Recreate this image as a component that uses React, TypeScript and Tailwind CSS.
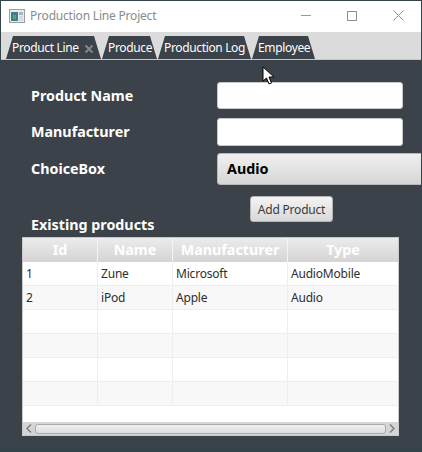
const font = { fontFamily: '"Noto Sans", "Open Sans", sans-serif' };

function Tab({ w, label, close, ml }: { w: string; label: string; close?: boolean; ml: string }) {
  return (
    <div className={`${w} ${ml} h-[23px] shrink-0 bg-[#3c4249] flex items-center whitespace-nowrap text-white text-[12px] tracking-[-0.35px] pt-[1px] [clip-path:polygon(7px_0,calc(100%-7px)_0,100%_100%,0_100%)] pl-[6px]`}>
      <span>{label}</span>
      {close && (
        <svg width="10" height="10" viewBox="0 0 10 10" className="ml-[5px] mt-[1px]">
          <path d="M1.5 1.5 L8.5 8.5 M8.5 1.5 L1.5 8.5" stroke="#83878c" strokeWidth="2" />
        </svg>
      )}
    </div>
  );
}

const Row = ({ cells, odd }: { cells: string[]; odd: boolean }) => (
  <div className={`grid grid-cols-[75px_75px_115px_110px] h-6 border-b border-[#eeeeee] ${odd ? 'bg-[#f8f8f8]' : 'bg-white'}`}>
    {cells.map((c, i) => (
      <div key={i} className="border-r border-[#eeeeee] last:border-r-0 pl-[3px] text-[12px] tracking-[-0.2px] leading-[23px] text-[#2e2e2e]">{c}</div>
    ))}
  </div>
);

const rows = [
  ['1', 'Zune', 'Microsoft', 'AudioMobile'],
  ['2', 'iPod', 'Apple', 'Audio'],
  ['', '', '', ''],
  ['', '', '', ''],
  ['', '', '', ''],
  ['', '', '', ''],
];

export default function App() {
  return (
    <div style={font} className="relative w-[422px] h-[452px] overflow-hidden bg-[#34444a] pt-px pl-px pr-px">
      <div className="h-[31px] bg-white flex items-center relative pb-[2px]">
        <svg width="16" height="14" viewBox="0 0 16 14" className="ml-[8px]">
          <rect x="0.5" y="0.5" width="15" height="13" fill="#e8ecee" stroke="#9a9fa3" />
          <rect x="2" y="3" width="7" height="9" fill="#3f7d8c" />
          <rect x="4" y="6" width="3" height="4" fill="#5aa36f" />
          <rect x="10" y="3" width="4" height="3" fill="#aab4bc" />
          <rect x="10" y="7" width="4" height="5" fill="#d3d9dd" />
        </svg>
        <span className="ml-[5px] text-[12px] tracking-[-0.2px] text-[#8b8b8b]">Production Line Project</span>
        <div className="ml-auto flex items-center">
          <div className="w-[46px] flex justify-center">
            <div className="w-[10px] h-px bg-[#9a9a9a]" />
          </div>
          <div className="w-[46px] flex justify-center">
            <div className="w-[10px] h-[10px] border border-[#8f8f8f]" />
          </div>
          <div className="w-[46px] flex justify-center">
            <svg width="11" height="11" viewBox="0 0 11 11">
              <path d="M0.5 0.5 L10.5 10.5 M10.5 0.5 L0.5 10.5" stroke="#909090" strokeWidth="1" />
            </svg>
          </div>
        </div>
      </div>

      <div className="h-[28px] bg-[#dbdbdb] flex items-end border-b border-[#c4c6c8] pl-[5px]">
        <Tab w="w-[95px]" ml="ml-0" label="Product Line" close />
        <Tab w="w-[55px]" ml="ml-px" label="Produce" />
        <Tab w="w-[93px]" ml="ml-px" label="Production Log" />
        <Tab w="w-[63px]" ml="ml-px" label="Employee" />
      </div>

      <div className="h-[386px] bg-[#3c4249] relative overflow-hidden pt-[22px] pl-[30px]">
        <div className="grid grid-cols-[186px_220px] w-[420px] font-bold text-white text-[14.3px]">
          <div className="h-[27px] flex items-center">Product Name</div>
          <input className="h-[27px] w-[186px] bg-white rounded-[3px] border border-[#c6c8ca]" readOnly />
          <div className="h-[28px] mt-[9px] flex items-center">Manufacturer</div>
          <input className="h-[28px] mt-[9px] w-[186px] bg-white rounded-[3px] border border-[#c6c8ca]" readOnly />
          <div className="h-[32px] mt-[7px] flex items-center">ChoiceBox</div>
          <div className="h-[32px] mt-[7px] w-[220px] rounded-[3px] border border-[#b8b8b8] bg-gradient-to-b from-[#f0f0f0] to-[#d6d6d6] text-black pl-[9px] flex items-center">Audio</div>
        </div>
        <div className="flex items-end h-[52px]">
          <div className="font-bold text-white text-[14.3px] leading-[20px] mb-[2px] w-[219px]">Existing products</div>
          <button className="h-[26px] w-[83px] mb-[15px] pt-[1px] rounded-[3px] border border-[#b4b4b4] bg-gradient-to-b from-[#f4f4f4] to-[#d8d8d8] text-[12px] tracking-[-0.2px] text-[#3a3a3a]">Add Product</button>
        </div>
        <div className="-ml-[9px] w-[377px] h-[199px] bg-white border border-[#c9c9c9] flex flex-col">
          <div className="grid grid-cols-[75px_75px_115px_110px] h-[24px] shrink-0 bg-gradient-to-b from-[#ececec] to-[#d4d4d4] text-white font-bold text-[14.3px] text-center">
            <div className="border-r border-[#f4f4f4] leading-[24px]">Id</div>
            <div className="border-r border-[#f4f4f4] leading-[24px]">Name</div>
            <div className="border-r border-[#f4f4f4] leading-[24px] whitespace-nowrap">Manufacturer</div>
            <div className="leading-[24px]">Type</div>
          </div>
          <div className="flex-1 overflow-hidden">
            {rows.map((r, i) => <Row key={i} cells={r} odd={i % 2 === 1} />)}
          </div>
          <div className="h-[13px] shrink-0 bg-[#d5d5d5] flex items-center px-[3px] gap-[3px]">
            <svg width="6" height="9" viewBox="0 0 6 9"><path d="M5 0.5 L1 4.5 L5 8.5" fill="none" stroke="#7d7d7d" strokeWidth="1.5" /></svg>
            <div className="flex-1 h-[10px] rounded-[3px] border border-[#aaaaaa] bg-gradient-to-b from-[#f0f0f0] to-[#dcdcdc]" />
            <svg width="6" height="9" viewBox="0 0 6 9"><path d="M1 0.5 L5 4.5 L1 8.5" fill="none" stroke="#7d7d7d" strokeWidth="1.5" /></svg>
          </div>
        </div>
      </div>

      <svg width="13" height="20" viewBox="0 0 13 20" className="absolute left-[262px] top-[66px]">
        <path d="M1 1 L1 15 L4.5 12 L7 18 L9.5 17 L7 11 L12 11 Z" fill="#fff" stroke="#000" strokeWidth="1" />
      </svg>
    </div>
  );
}
